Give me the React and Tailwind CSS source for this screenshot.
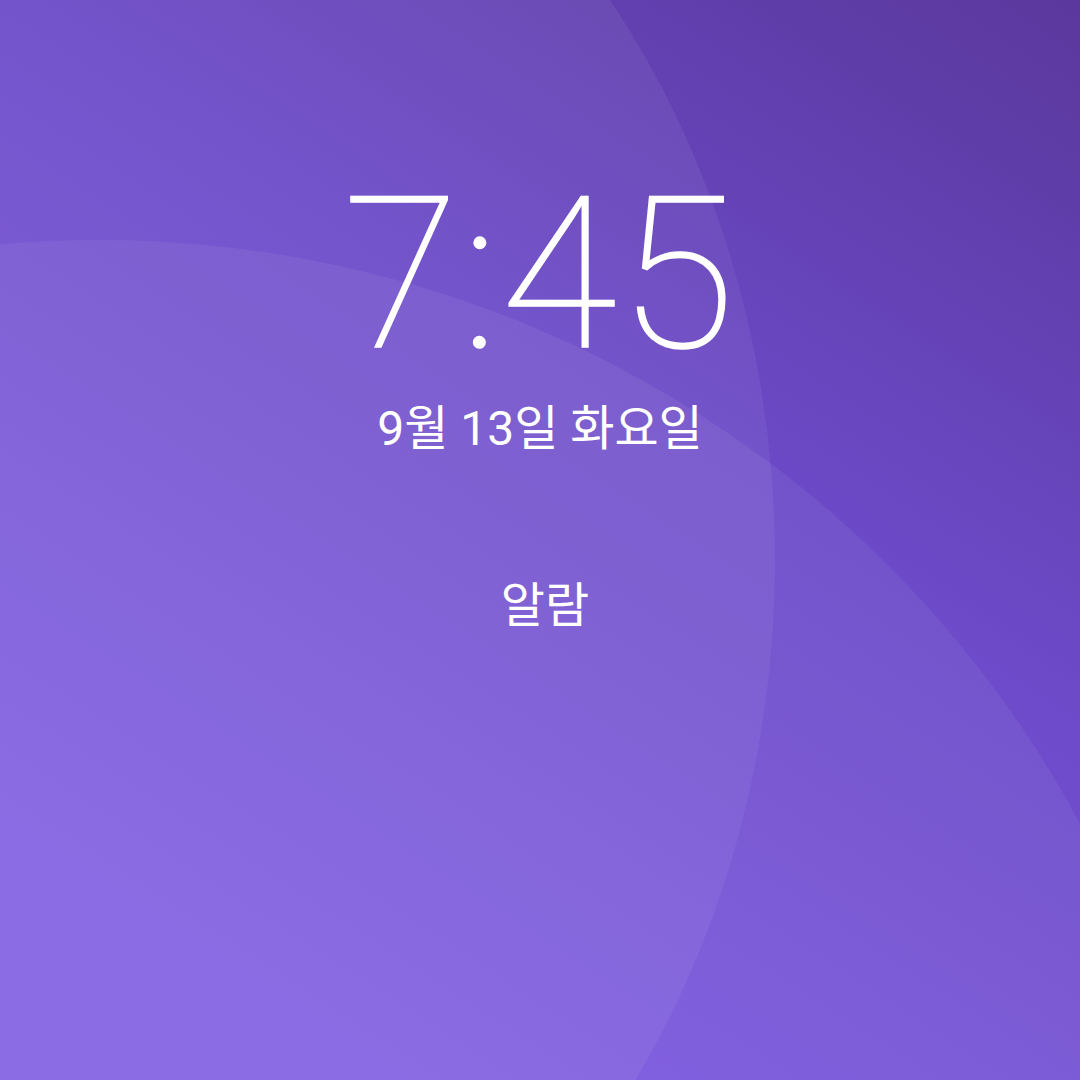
import React from "react";

const Wallpaper = () => (
  <svg
    className="absolute inset-0 w-full h-full"
    viewBox="0 0 1080 1080"
    preserveAspectRatio="none"
  >
    <defs>
      <linearGradient id="base" x1="1" y1="0" x2="0.35" y2="1">
        <stop offset="0" stopColor="#5a389c" />
        <stop offset="0.45" stopColor="#6c4ac8" />
        <stop offset="1" stopColor="#7e5ae2" />
      </linearGradient>
    </defs>
    <rect width="1080" height="1080" fill="url(#base)" />
    <ellipse cx="0" cy="560" rx="775" ry="908" fill="#ffffff" fillOpacity="0.06" />
    <ellipse cx="100" cy="1340" rx="1110" ry="1100" fill="#ffffff" fillOpacity="0.06" />
  </svg>
);

export default function App() {
  return (
    <div className="relative w-[1080px] h-[1080px] overflow-hidden">
      <Wallpaper />
      <div className="relative flex flex-col items-center pt-[169px] text-white">
        <div className="font-['Roboto',sans-serif] font-thin text-[212px] leading-none tracking-[2px] [-webkit-text-stroke:1.5px_white]">
          7:45
        </div>
        <div className="mt-[24px] font-['Roboto','Noto_Sans_CJK_KR',sans-serif] text-[48px] leading-none">
          9월 13일 화요일
        </div>
        <div className="mt-[124px] ml-[10px] font-['Noto_Sans_CJK_KR',sans-serif] text-[48px] leading-none">
          알람
        </div>
      </div>
    </div>
  );
}
